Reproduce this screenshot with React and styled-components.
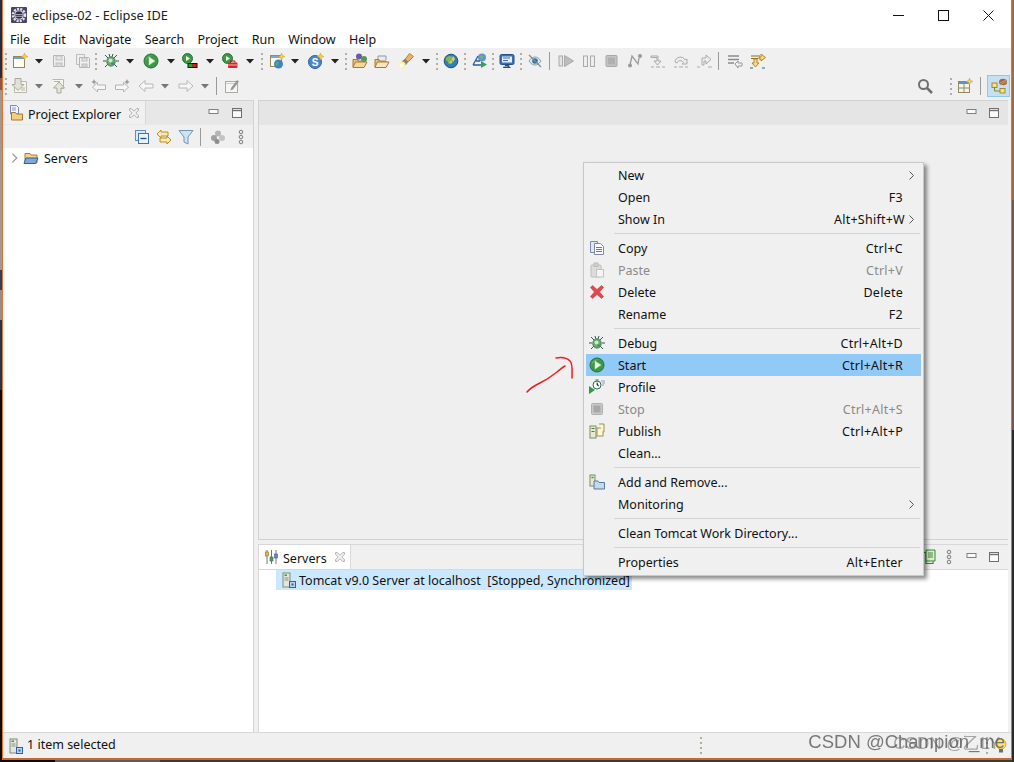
import React from 'react';
import styled, { createGlobalStyle } from 'styled-components';

const GlobalStyle = createGlobalStyle`
  html, body {
    margin: 0;
    padding: 0;
    width: 1014px;
    height: 762px;
    overflow: hidden;
  }
  html {
    background:
      linear-gradient(#1c2f4a 0 78px, #8a5a3a 78px 90px, #9a9a9a 90px 270px, #2c4060 270px 290px, #8f8f8f 290px 320px, #24344e 320px 390px, #0c0c0c 390px) left top / 2px 100% no-repeat,
      linear-gradient(#a8693a 0 200px, #6f5a4c 200px 430px, #2a2a2a 430px) right top / 2px 100% no-repeat,
      linear-gradient(90deg, #0a0a0a 0 55px, #5c5c5c 55px 160px, #3a3a3a 160px) left bottom / 100% 2px no-repeat,
      #333;
  }
  body, button {
    font-family: "Noto Sans", "Open Sans", sans-serif;
    font-size: 12.5px;
    color: #111;
  }
`;

const Window = styled.div`
  position: relative;
  margin-left: 2px;
  width: 1010px;
  height: 760px;
  box-sizing: border-box;
  display: flex;
  flex-direction: column;
  background: #f0f0f0;
  border-left: 1px solid #e8702a;
  border-right: 1px solid #d07a3a;
  border-bottom: 2px solid #c96a28;
  overflow: hidden;
`;

const TitleBar = styled.div`
  height: 30px;
  display: flex;
  align-items: center;
  background: #fff;
  padding-left: 8px;
`;

const TitleText = styled.span`
  margin-left: 5px;
  font-size: 12.8px;
  color: #222;
`;

const WindowButtons = styled.div`
  margin-left: auto;
  display: flex;
`;

const WindowButton = styled.div`
  width: 45px;
  height: 30px;
  display: flex;
  align-items: center;
  justify-content: center;
`;

const MenuBar = styled.div`
  height: 18px;
  display: flex;
  align-items: center;
  gap: 13.3px;
  background: #fff;
  padding-left: 7px;
`;

const MenuTitle = styled.span`
  line-height: 18px;
  padding-top: 1px;
`;

const ToolArea = styled.div`
  height: 52px;
  background: #f0f0f0;
`;

const ToolRow = styled.div`
  height: ${p => p.$h}px;
  display: flex;
  align-items: center;
`;

const ToolSvg = styled.svg`
  flex: none;
  display: block;
  margin-left: ${p => p.$gap || 0}px;
`;

const Grip = styled.span`
  flex: none;
  width: 2px;
  height: 17px;
  margin-left: ${p => p.$gap}px;
  background: repeating-linear-gradient(#b5aea0 0 2px, transparent 2px 5px);
`;

const Divider = styled.span`
  flex: none;
  width: 1px;
  height: 18px;
  margin-left: ${p => p.$gap}px;
  background: #9a9a9a;
`;

const PushRight = styled.span`
  margin-left: auto;
`;

const ActiveBox = styled.span`
  flex: none;
  width: 21px;
  height: 20px;
  margin: 0 1px 0 6px;
  display: flex;
  align-items: center;
  justify-content: center;
  background: #c4e0f5;
  border: 1px solid #92c6ee;
`;

const Workbench = styled.div`
  flex: 1;
  min-height: 0;
  display: flex;
  gap: 4px;
  padding-right: 3px;
`;

const LeftPanel = styled.section`
  width: 250px;
  display: flex;
  flex-direction: column;
  border-right: 1px solid #d2d2d2;
  border-top: 1px solid #d2d2d2;
`;

const RightColumn = styled.div`
  flex: 1;
  min-width: 0;
  display: flex;
  flex-direction: column;
  gap: 4px;
`;

const PanelHeader = styled.div`
  height: ${p => p.$h}px;
  flex: none;
  box-sizing: border-box;
  display: flex;
  align-items: center;
  background: ${p => p.$bg};
  border-bottom: 1px solid ${p => p.$line || 'transparent'};
`;

const Tab = styled.div`
  width: ${p => p.$w}px;
  align-self: stretch;
  flex: none;
  box-sizing: border-box;
  display: flex;
  align-items: center;
  padding-left: ${p => p.$pad}px;
  background: ${p => p.$bg};
  border-right: 1px solid #d8d8d8;
`;

const TabLabel = styled.span`
  margin-left: ${p => p.$gap}px;
  margin-right: 6px;
  padding-top: ${p => p.$drop}px;
  white-space: nowrap;
`;

const ViewControls = styled.div`
  margin-left: auto;
  display: flex;
  align-items: center;
  gap: ${p => p.$gap || 7}px;
  padding-right: ${p => p.$pad || 7}px;
`;

const PanelToolbar = styled.div`
  height: 23px;
  flex: none;
  display: flex;
  align-items: center;
  justify-content: flex-end;
  padding-right: 4px;
  background: #f0f0f0;
`;

const Tree = styled.div`
  flex: 1;
  background: #fff;
`;

const TreeRow = styled.div`
  height: 20px;
  display: flex;
  align-items: center;
  padding-left: 5px;
`;

const TreeLabel = styled.span`
  margin-left: 5px;
`;

const EditorArea = styled.section`
  height: 440px;
  flex: none;
  box-sizing: border-box;
  display: flex;
  flex-direction: column;
  background: #efefef;
  border: 1px solid #d2d2d2;
  border-right: none;
`;

const ServersPanel = styled.section`
  flex: 1;
  min-height: 0;
  display: flex;
  flex-direction: column;
  border: 1px solid #d8d8d8;
  border-bottom: none;
  border-right: none;
`;

const ServerList = styled.div`
  flex: 1;
  background: #fff;
  padding-left: 17px;
`;

const ServerRow = styled.div`
  width: 356px;
  height: 20px;
  box-sizing: border-box;
  display: flex;
  align-items: center;
  padding-left: 5px;
  background: #cce8ff;
`;

const ServerLabel = styled.span`
  margin-left: 2px;
  white-space: pre;
`;

const StatusBar = styled.footer`
  height: 26px;
  flex: none;
  display: flex;
  align-items: center;
  padding-left: 5px;
  background: #f0f0f0;
  border-top: 1px solid #d8d8d8;
  box-sizing: border-box;
`;

const StatusText = styled.span`
  margin-left: 3px;
  padding-bottom: 3px;
`;

const ContextMenu = styled.div`
  position: absolute;
  left: 580px;
  top: 162px;
  width: 341px;
  box-sizing: border-box;
  padding: 1px 2px 2px;
  background: #f0f0f0;
  border: 1px solid #c8c8c8;
  box-shadow: 3px 3px 4px rgba(0, 0, 0, 0.45);
  z-index: 5;
`;

const MenuRow = styled.div`
  height: 22px;
  display: flex;
  align-items: center;
  background: ${p => (p.$active ? '#91c9f7' : 'transparent')};
  color: ${p => (p.$disabled ? '#8a8a8a' : '#111')};
`;

const MenuIconSlot = styled.span`
  flex: none;
  width: 32px;
  box-sizing: border-box;
  padding-left: 3px;
  display: flex;
  align-items: center;
`;

const MenuLabel = styled.span`
  white-space: nowrap;
`;

const Shortcut = styled.span`
  margin-left: auto;
  padding-right: 18px;
  letter-spacing: 0.25px;
  white-space: nowrap;
`;

const SubArrow = styled.span`
  margin-left: auto;
  padding-right: 7px;
  display: flex;
`;

const ShortcutWithArrow = styled(Shortcut)`
  padding-right: 4px;
`;

const ArrowAfter = styled.span`
  padding-right: 7px;
  display: flex;
`;

const MenuSeparator = styled.div`
  height: 1px;
  margin: 3px 1px 3px 28px;
  background: #d4d4d4;
`;

const Scribble = styled.svg`
  position: absolute;
  left: 521px;
  top: 355px;
  z-index: 6;
`;

const Watermark = styled.span`
  position: absolute;
  right: ${p => p.$right}px;
  bottom: ${p => p.$bottom}px;
  font-family: "Liberation Sans", Arial, sans-serif;
  font-size: ${p => p.$size}px;
  color: rgba(90, 90, 90, ${p => p.$alpha});
  filter: blur(0.4px);
  white-space: nowrap;
  z-index: 7;
`;

const ICONS = {
  app: <><rect x="0" y="0" width="16" height="16" rx="1" fill="#4b4568" /><circle cx="8" cy="8" r="6" fill="none" stroke="#e6e6e6" strokeWidth="2.400" strokeDasharray="2 1.200" /><circle cx="8" cy="8" r="4.600" fill="#e6e6e6" /><circle cx="8" cy="8" r="3.700" fill="#2c2a4c" /><path d="M4.500 7.500h7M4.500 9.300h7" stroke="#c8c8d4" strokeWidth=".8" /></>,
  new: <><rect x="1.500" y="3.500" width="11" height="11" fill="#fffdf2" stroke="#96845a" /><rect x="2" y="4" width="10" height="2" fill="#6f9fd6" /><path d="M12.500 0l1 2.500 2.500 1-2.500 1-1 2.500-1-2.500-2.500-1 2.500-1z" fill="#f6d04a" stroke="#c59a2a" strokeWidth=".5" /></>,
  save: <><path d="M2.500 2.500h10l1 1v10h-11z" fill="#f0f0f0" stroke="#b4b4b4" /><rect x="5" y="3" width="6" height="4" fill="#e4e4e4" stroke="#bdbdbd" /><rect x="5" y="10" width="6" height="3.500" fill="#d8d8d8" stroke="#bdbdbd" /></>,
  saveAll: <><path d="M1.500 1.500h8v3h-5v7h-3z" fill="#eee" stroke="#bdbdbd" /><path d="M4.500 4.500h9l1 1v9h-10z" fill="#f0f0f0" stroke="#b4b4b4" /><rect x="7" y="5" width="5" height="3" fill="#e4e4e4" stroke="#bdbdbd" /><rect x="7" y="11" width="5" height="3" fill="#d8d8d8" stroke="#bdbdbd" /></>,
  debug: <><path d="M2 2l3 3M14 2l-3 3M0 8h3M13 8h3M2 14l3-3M14 14l-3-3M6 1l1 3M10 1L9 4" stroke="#2e5a4c" strokeWidth="1" /><ellipse cx="8" cy="8.500" rx="4.200" ry="4.600" fill="#6fae6a" stroke="#3f7a5a" /><circle cx="7.500" cy="7.500" r="2" fill="#cfe6d0" /><circle cx="9.500" cy="10.500" r="1.200" fill="#3f8a7a" /></>,
  run: <><circle cx="8" cy="8" r="7" fill="#3a9a4a" stroke="#2b7039" /><path d="M2.500 8a5.500 5.500 0 0 1 8-4.900A7 7 0 0 0 2.500 11z" fill="#66b870" /><path d="M6 4l6 4-6 4z" fill="#f0f8e0" stroke="#d4e8b8" strokeWidth=".5" /></>,
  runServer: <><circle cx="5.500" cy="5.500" r="5" fill="#3a9a4a" stroke="#2b7039" /><path d="M4 3l4 2.500L4 8z" fill="#f0f8e0" /><rect x="5.500" y="10" width="10" height="5" fill="#111" /><rect x="6.500" y="11" width="4" height="3" fill="#22a52c" /><rect x="10.500" y="11" width="4" height="3" fill="#d81f1f" /></>,
  runTool: <><circle cx="5.500" cy="5.500" r="5" fill="#3a9a4a" stroke="#2b7039" /><path d="M4 3l4 2.500L4 8z" fill="#f0f8e0" /><rect x="6" y="9.500" width="9.500" height="5.500" rx="1" fill="#d8262c" /><path d="M8.500 9.500V8h4.500v1.500" fill="none" stroke="#a51a1f" /><rect x="6" y="11.500" width="9.500" height="1" fill="#f4b4b4" /></>,
  newServer: <><rect x="1.500" y="2.500" width="11" height="11" fill="#fbfaf0" stroke="#9a8a60" /><rect x="2" y="3" width="10" height="2" fill="#7ba6d8" /><circle cx="9.500" cy="11" r="4.500" fill="#3f83c4" /><path d="M7 9c2-1 3 1 2 3s-3 1-2-3z" fill="#62ad4e" /><path d="M12.500 0l1 2.500 2.500 1-2.500 1-1 2.500-1-2.500-2.500-1 2.500-1z" fill="#f6d04a" stroke="#c59a2a" strokeWidth=".5" /></>,
  springS: <><circle cx="7" cy="9" r="6.500" fill="#4a86c8" stroke="#2f629c" /><text x="7" y="12.500" textAnchor="middle" fontSize="10" fontWeight="700" fill="#fff" fontFamily="Liberation Sans">S</text><path d="M12.500 0l1 2.500 2.500 1-2.500 1-1 2.500-1-2.500-2.500-1 2.500-1z" fill="#f6d04a" stroke="#c59a2a" strokeWidth=".5" /></>,
  openProject: <><circle cx="7" cy="3.500" r="3" fill="#6a5aa8" /><circle cx="12" cy="6" r="3" fill="#4c9a5a" /><path d="M1 6.500h5v1.500h5v6H1z" fill="#e9c17c" stroke="#a97a2e" /><path d="M1 14l2.500-5H15l-3 5.500H1z" fill="#f3d89c" stroke="#a97a2e" /></>,
  openFile: <><path d="M4 7V3h8v4" fill="#e8eaf2" stroke="#8f97ad" /><path d="M1 6.500h4v1.500h7v6H1z" fill="#e9c17c" stroke="#a97a2e" /><path d="M1 14l2.500-5H15l-3 5.500H1z" fill="#f7e6c0" stroke="#a97a2e" /></>,
  torch: <><path d="M7 6.500L11.500 .5 15.500 3.500 10 9z" fill="#e8b464" stroke="#b8822a" /><path d="M4 8.500L7 6 10 9 7.500 12z" fill="#8a8078" stroke="#777" strokeWidth=".5" /><circle cx="4" cy="12" r="3.500" fill="#fff0a0" /><circle cx="3.500" cy="12.500" r="2" fill="#fffce8" /></>,
  globe: <><circle cx="8" cy="8" r="6.800" fill="#2f7fbe" stroke="#1f4f82" /><path d="M3 5c3-3 6-2 7 0s-1 3-2 5-3 1-3-1-3 0-2-4z" fill="#7db85a" /><path d="M10 3l2 3-2 3-1-3z" fill="#f4d050" /><circle cx="8" cy="9" r="1.500" fill="#e7c34a" /></>,
  globeRun: <><circle cx="10" cy="4.500" r="4" fill="#5f98d0" /><path d="M8 3c2-1 3 0 3 2l-2 1z" fill="#7db85a" /><path d="M1 12L6 3M1 12h8M4 8h4" stroke="#2f5b96" strokeWidth="1.300" /><path d="M9 8l6 3.500L9 15z" fill="#37a153" /></>,
  monitor: <><rect x="1" y="1.500" width="14" height="10" rx="1.500" fill="#3f6fb0" stroke="#25508c" /><rect x="3" y="3.500" width="10" height="6" fill="#e6eefa" /><path d="M4 5h7M4 7.500h5" stroke="#3f6fb0" strokeWidth="1" /><path d="M6 12.500h4v1.500H4.500v.5h7" fill="#25508c" stroke="#25508c" /></>,
  eye: <><path d="M2 8c2-3 4-4 6-4s4 1 6 4c-2 3-4 4-6 4s-4-1-6-4z" fill="#dfe8ee" stroke="#8aa0b0" /><circle cx="8" cy="8" r="2.800" fill="#1f78b0" /><path d="M2 2l12 12" stroke="#8a8a8a" strokeWidth="1.300" /></>,
  resume: <><rect x="1" y="3" width="3.500" height="10" fill="#e4e4e4" stroke="#aaa" /><path d="M6.500 2.500L15.500 8l-9 5.500z" fill="#bdbdbd" stroke="#aaa" /></>,
  pause: <><rect x="2.500" y="3" width="4" height="10.500" fill="#eee" stroke="#aaa" /><rect x="9.500" y="3" width="4" height="10.500" fill="#eee" stroke="#aaa" /></>,
  stop: <><rect x="2" y="2.500" width="11" height="11" rx="1" fill="#c4c4c4" stroke="#a8a8a8" /><rect x="4" y="4.500" width="7" height="7" fill="#b0b0b0" /></>,
  disconnect: <><circle cx="3" cy="12.500" r="2" fill="#999" /><circle cx="13" cy="3" r="2" fill="#999" /><path d="M3 12L5 3l6 8 1-6" fill="none" stroke="#9c9c9c" strokeWidth="1.300" /></>,
  stepInto: <><path d="M1 3h7v5h3l-3.500 4L4 8h3V4.500H1z" fill="#eee" stroke="#aaa" /><path d="M1 14h3M6 14h4M12 14h3" stroke="#aaa" strokeWidth="1.200" /></>,
  stepOver: <><path d="M2 9c0-5 8-7 10-2l2-1v5h-5l1.500-1.500C9 7 5 7 4 10z" fill="#eee" stroke="#aaa" /><path d="M1 14h3M6 14h4M12 14h3" stroke="#aaa" strokeWidth="1.200" /></>,
  stepReturn: <><path d="M5 12V5h4V2l5 4.500L9 11V8H7v4z" fill="#eee" stroke="#aaa" /><path d="M0 14h3M11 14h4" stroke="#aaa" strokeWidth="1.200" /></>,
  list: <><path d="M1 3h11M1 6.500h11M1 10h6" stroke="#8a8a8a" strokeWidth="1.400" /><path d="M8 11l3-3v2h4v3h-4v2z" fill="#f2f2f2" stroke="#999" /></>,
  useStep: <><path d="M1 3h9M1 5.500h7" stroke="#8c6a1e" strokeWidth="1.200" /><path d="M4 6h3v4h2l-3.500 4L2 10h2z" fill="#f6d98c" stroke="#b8861e" /><path d="M9 4h2V1l4.500 3.500L11 8V6H9z" fill="#f6d98c" stroke="#b8861e" /><path d="M0 15h3M12 15h3" stroke="#2f5b96" strokeWidth="1.200" /></>,
  importDoc: <><path d="M6.500 3.500h8v11h-12V9" fill="#f6f6f0" stroke="#b8b8ac" /><path d="M3 .5h6v6h3l-6 6-6-6h3z" fill="#e2e2d8" stroke="#a8a89c" /><path d="M9 10h4M9 12h4" stroke="#b4b4a8" /></>,
  exportDoc: <><path d="M1.500 1.500h11v9h-5" fill="#f6f6f0" stroke="#b8b8ac" /><path d="M6 15v-5H2.500L8 4l5.500 6H10v5z" fill="#e6e6dc" stroke="#a8a89c" /><path d="M3 3.500h6" stroke="#b4b4a8" /></>,
  backEdit: <><path d="M1.500 9l5-4.500V7h8v4.500h-8V14z" fill="#f6f6f6" stroke="#b4b4b4" /><path d="M3 1l.9 2 2 .9-2 .9-.9 2-.9-2-2-.9 2-.9z" fill="#9a9a9a" /></>,
  fwdEdit: <><path d="M14.500 9l-5-4.500V7h-8v4.500h8V14z" fill="#f6f6f6" stroke="#b4b4b4" /><path d="M13 1l.9 2 2 .9-2 .9-.9 2-.9-2-2-.9 2-.9z" fill="#9a9a9a" /></>,
  back: <path d="M1 8l6-5.500V6h8v4H7v3.500z" fill="#f6f6f6" stroke="#b8b8b8" />,
  forward: <path d="M15 8L9 2.500V6H1v4h8v3.500z" fill="#f6f6f6" stroke="#b8b8b8" />,
  pin: <><rect x="1.500" y="3.500" width="12" height="11" fill="#f6f6f2" stroke="#aaa" /><path d="M2 5.500h11" stroke="#ccc" /><path d="M7 10l6-8 2 1.500-6 8-2.500 1z" fill="#999" /></>,
  search: <><circle cx="6.500" cy="6.500" r="4.500" fill="none" stroke="#707070" strokeWidth="2" /><path d="M10 10l5 5" stroke="#707070" strokeWidth="2.500" /></>,
  perspective: <><rect x="1.500" y="3.500" width="11" height="11" fill="#f6f4e6" stroke="#8f8a66" /><rect x="2" y="4" width="10" height="2" fill="#5f92cc" /><path d="M7 6v8M2 10h10" stroke="#8f8a66" /><path d="M12.500 0l1 2.500 2.500 1-2.500 1-1 2.500-1-2.500-2.500-1 2.500-1z" fill="#f6d04a" stroke="#c59a2a" strokeWidth=".5" /></>,
  javaEE: <><rect x="1" y="5" width="5" height="4.500" fill="#f8e080" stroke="#a98a2a" /><rect x="9" y="10.500" width="5" height="4.500" fill="#f8e080" stroke="#a98a2a" /><path d="M3.500 9.500V13H9" fill="none" stroke="#7a8a3a" /><ellipse cx="12" cy="4" rx="4" ry="3.300" fill="#a5683a" /><path d="M9 5l6-3M10 6.500l5-3" stroke="#d8b08a" strokeWidth=".7" /></>,
  explorer: <><path d="M2.500 .5h6l2 2V9h-8z" fill="#f5f5ff" stroke="#7a86b0" /><path d="M4 3h4M4 5h4" stroke="#8a96c0" /><path d="M3.500 7.500h4l1 1.500h6v6h-11z" fill="#f3cf86" stroke="#a67a2c" /></>,
  tabClose: <path d="M3 3l2 0 3 3 3-3 2 0 0 2-3 3 3 3 0 2-2 0-3-3-3 3-2 0 0-2 3-3-3-3z" fill="#f4f4f4" stroke="#8e8e8e" strokeWidth=".8" />,
  collapse: <><rect x="1.500" y="1.500" width="10" height="10" fill="#dcebf8" stroke="#5f8fc0" /><rect x="4.500" y="4.500" width="10" height="10" fill="#e8f2fb" stroke="#3f74ae" /><path d="M6.500 9.500h6" stroke="#1f4f8a" strokeWidth="1.300" /></>,
  link: <><path d="M1 5l4-4v2h7v4H5v2z" fill="#fbeab8" stroke="#c08a1e" /><path d="M15 11l-4-4v2H4v4h7v2z" fill="#fbeab8" stroke="#c08a1e" /></>,
  filter: <path d="M1 1.500h14l-5 6.500v7l-4-2V8z" fill="#cfe2f2" stroke="#7096b8" />,
  group: <><circle cx="8" cy="4.500" r="3" fill="#b5b5b5" /><circle cx="4" cy="9" r="3" fill="#a0a0a0" /><circle cx="12" cy="9" r="3" fill="#c4c4c4" /><circle cx="7" cy="12.500" r="2.500" fill="#8e8e8e" /></>,
  viewMenu: <><circle cx="8" cy="3" r="1.800" fill="#e8e8e8" stroke="#7f7f7f" /><circle cx="8" cy="8" r="1.800" fill="#e8e8e8" stroke="#7f7f7f" /><circle cx="8" cy="13" r="1.800" fill="#e8e8e8" stroke="#7f7f7f" /></>,
  minimize: <rect x="3" y="4.500" width="9" height="4" fill="#fafafa" stroke="#7f7f7f" />,
  maximize: <><rect x="2.500" y="3.500" width="9" height="9" fill="#fafafa" stroke="#6f6f6f" /><path d="M3 5.500h8" stroke="#6f6f6f" strokeWidth="1.400" /></>,
  chevron: <path d="M5 3l5 5-5 5" fill="none" stroke="#9a9a9a" strokeWidth="1.500" />,
  folder: <><path d="M2 3.500h5l1 1.500h6v8H2z" fill="#f2d58c" stroke="#a97f34" /><path d="M1 13.500l2-5.500h12l-2.500 5.500z" fill="#7fa9dc" stroke="#2f5f9e" /></>,
  copy: <><path d="M1.500 1.500h7v11h-7z" fill="#dfe7f2" stroke="#7a8aa8" /><path d="M5.500 3.500h6l3 3v8h-9z" fill="#fbfbff" stroke="#7a8aa8" /><path d="M7 7.500h6M7 9.500h6M7 11.500h6" stroke="#6a7aa0" /></>,
  paste: <><rect x="2" y="3" width="10" height="12" rx="1" fill="#dcdcdc" stroke="#bdbdbd" /><rect x="5" y="1" width="4" height="3.500" fill="#cfcfcf" stroke="#bdbdbd" /><rect x="7.500" y="7.500" width="7" height="7.500" fill="#f4f4f4" stroke="#c4c4c4" /></>,
  delete: <path d="M1.500 3.500L3.500 1.500 8 5.500 12.500 1.500 14.500 3.500 10.500 8 14.500 12.500 12.500 14.500 8 10.500 3.500 14.500 1.500 12.500 5.500 8z" fill="#e0494c" stroke="#c8383a" strokeWidth=".6" />,
  profile: <><circle cx="8" cy="6" r="4" fill="#fff" stroke="#2e6a4a" /><path d="M8 3.500V6l2 1M6.500 1h3" stroke="#2e6a4a" /><path d="M12 2h4M13 4h3M13 6h2" stroke="#6a8ac0" strokeWidth=".8" /><path d="M0 7l6 4-6 4z" fill="#2f9a4a" /></>,
  stopSmall: <><rect x="2.500" y="2.500" width="11" height="11" rx="1" fill="#c8c8c8" stroke="#b0b0b0" /><rect x="4.500" y="4.500" width="7" height="7" fill="#a8a8a8" /></>,
  publish: <><rect x="1" y="3" width="6" height="12" fill="#e6ebd8" stroke="#7a8a6a" /><path d="M2.500 5.500h3M2.500 8.500h3" stroke="#3a8a3a" strokeWidth="1.200" /><rect x="8" y="5" width="6" height="8" fill="#fff7d0" stroke="#a09050" /><path d="M10 1h5v8h-1" fill="#fff7d0" stroke="#a09050" /></>,
  addRemove: <><rect x="1" y="1" width="5" height="11" fill="#e6ebd8" stroke="#7a8a6a" /><path d="M2.500 3.500h2" stroke="#2f9a3a" strokeWidth="1.500" /><path d="M5 7h4l1 1.500h5.500V15H5z" fill="#c6d8ec" stroke="#5a7a9a" /></>,
  server: <><rect x="2" y="1" width="7" height="14" fill="#e4e6da" stroke="#7f8a80" /><rect x="3.500" y="2.500" width="2.500" height="1.500" fill="#2fa23a" /><path d="M3.500 6h4M3.500 8h4" stroke="#8a9288" /><rect x="8.500" y="9.500" width="6" height="6" fill="#b8d4f0" stroke="#2f5fa6" /><rect x="10.500" y="11.500" width="2" height="2" fill="#2f5fa6" /></>,
  serversTab: <><path d="M4 1v14M8.500 1v14M13 1v14" stroke="#777" /><rect x="2.500" y="3" width="3" height="4" fill="#e8b84a" stroke="#8a6a1e" strokeWidth=".6" /><rect x="7" y="8" width="3" height="4" fill="#5f9a5a" stroke="#3a6a3a" strokeWidth=".6" /><rect x="11.500" y="5" width="3" height="4" fill="#5f8fc8" stroke="#2f5f96" strokeWidth=".6" /></>,
  greenDoc: <><path d="M1 3.500h4v11h7v-2" fill="none" stroke="#2f8a3a" strokeWidth="1.200" /><path d="M5 1h9v11H5z" fill="#dff0c8" stroke="#2f8a3a" /><path d="M7 4h5M7 6h5M7 8h5" stroke="#3a8a3a" /></>,
  bulb: <><circle cx="8" cy="6" r="5" fill="#fbe27a" stroke="#d8a92e" /><rect x="6" y="11" width="4" height="3.500" fill="#5a6f96" /></>,
};

const Icon = ({ name, gap, size = 16 }) => (
  <ToolSvg $gap={gap} width={size} height={size} viewBox="0 0 16 16">
    {ICONS[name]}
  </ToolSvg>
);

const Drop = ({ gap, color = '#222' }) => (
  <ToolSvg $gap={gap} width="8" height="5" viewBox="0 0 8 5">
    <path d="M0 0h8L4 4.500z" fill={color} />
  </ToolSvg>
);

const SmallArrow = () => (
  <svg width="5" height="9" viewBox="0 0 5 9">
    <path d="M0.500 0.500L4.500 4.500 0.500 8.500" fill="none" stroke="#555" />
  </svg>
);

const TOP_TOOLS = [
  ['grip', 2], ['new', 5], ['drop', 7], ['save', 8], ['saveAll', 8], ['grip', 4],
  ['debug', 6], ['drop', 7], ['run', 9], ['drop', 8], ['runServer', 7], ['drop', 8],
  ['runTool', 8], ['drop', 8], ['grip', 7], ['newServer', 6], ['drop', 6], ['springS', 9],
  ['drop', 7], ['grip', 6], ['openProject', 5], ['openFile', 6], ['torch', 8], ['drop', 8],
  ['grip', 6], ['globe', 5], ['grip', 5], ['globeRun', 6], ['grip', 4], ['monitor', 5],
  ['grip', 5], ['eye', 5], ['sep', 6], ['resume', 8], ['pause', 7], ['stop', 7],
  ['disconnect', 7], ['stepInto', 7], ['stepOver', 7], ['stepReturn', 8], ['sep', 5],
  ['list', 8], ['useStep', 7],
];

const LOWER_TOOLS = [
  ['grip', 2], ['importDoc', 5], ['greyDrop', 7], ['exportDoc', 8], ['greyDrop', 8],
  ['backEdit', 8], ['fwdEdit', 7], ['back', 8], ['greyDrop', 7], ['forward', 9],
  ['greyDrop', 7], ['sep', 7], ['pin', 7],
];

const renderTool = ([name, gap], i) => {
  if (name === 'grip') return <Grip key={i} $gap={gap} />;
  if (name === 'sep') return <Divider key={i} $gap={gap} />;
  if (name === 'drop') return <Drop key={i} gap={gap} />;
  if (name === 'greyDrop') return <Drop key={i} gap={gap} color="#777" />;
  return <Icon key={i} name={name} gap={gap} />;
};

const MENU = [
  { label: 'New', sub: true },
  { label: 'Open', keys: 'F3' },
  { label: 'Show In', keys: 'Alt+Shift+W', sub: true },
  'sep',
  { label: 'Copy', icon: 'copy', keys: 'Ctrl+C' },
  { label: 'Paste', icon: 'paste', keys: 'Ctrl+V', disabled: true },
  { label: 'Delete', icon: 'delete', keys: 'Delete' },
  { label: 'Rename', keys: 'F2' },
  'sep',
  { label: 'Debug', icon: 'debug', keys: 'Ctrl+Alt+D' },
  { label: 'Start', icon: 'run', keys: 'Ctrl+Alt+R', active: true },
  { label: 'Profile', icon: 'profile' },
  { label: 'Stop', icon: 'stopSmall', keys: 'Ctrl+Alt+S', disabled: true },
  { label: 'Publish', icon: 'publish', keys: 'Ctrl+Alt+P' },
  { label: 'Clean...' },
  'sep',
  { label: 'Add and Remove...', icon: 'addRemove' },
  { label: 'Monitoring', sub: true },
  'sep',
  { label: 'Clean Tomcat Work Directory...' },
  'sep',
  { label: 'Properties', keys: 'Alt+Enter' },
];

const MenuEntry = ({ item }) => (
  <MenuRow $active={item.active} $disabled={item.disabled}>
    <MenuIconSlot>{item.icon && <Icon name={item.icon} />}</MenuIconSlot>
    <MenuLabel>{item.label}</MenuLabel>
    {item.keys && !item.sub && <Shortcut>{item.keys}</Shortcut>}
    {item.keys && item.sub && <ShortcutWithArrow>{item.keys}</ShortcutWithArrow>}
    {item.sub && !item.keys && <SubArrow><SmallArrow /></SubArrow>}
    {item.sub && item.keys && <ArrowAfter><SmallArrow /></ArrowAfter>}
  </MenuRow>
);

const MENU_TITLES = ['File', 'Edit', 'Navigate', 'Search', 'Project', 'Run', 'Window', 'Help'];

export default function App() {
  return (
    <>
      <GlobalStyle />
      <Window>
        <TitleBar>
          <Icon name="app" />
          <TitleText>eclipse-02 - Eclipse IDE</TitleText>
          <WindowButtons>
            <WindowButton>
              <svg width="11" height="11" viewBox="0 0 11 11"><path d="M0 5.500h11" stroke="#111" /></svg>
            </WindowButton>
            <WindowButton>
              <svg width="11" height="11" viewBox="0 0 11 11"><rect x=".5" y=".5" width="10" height="10" fill="none" stroke="#111" /></svg>
            </WindowButton>
            <WindowButton>
              <svg width="11" height="11" viewBox="0 0 11 11"><path d="M.5.500l10 10M10.500.500l-10 10" stroke="#111" /></svg>
            </WindowButton>
          </WindowButtons>
        </TitleBar>

        <MenuBar>
          {MENU_TITLES.map(t => <MenuTitle key={t}>{t}</MenuTitle>)}
        </MenuBar>

        <ToolArea>
          <ToolRow $h={26}>{TOP_TOOLS.map(renderTool)}</ToolRow>
          <ToolRow $h={24}>
            {LOWER_TOOLS.map(renderTool)}
            <PushRight />
            <Icon name="search" />
            <Grip $gap={17} />
            <Icon name="perspective" gap={5} />
            <Divider $gap={7} />
            <ActiveBox><Icon name="javaEE" /></ActiveBox>
          </ToolRow>
        </ToolArea>

        <Workbench>
          <LeftPanel>
            <PanelHeader $h={24} $bg="#e7e7e7">
              <Tab $w={143} $pad={5} $bg="#f0f0f0">
                <Icon name="explorer" />
                <TabLabel $gap={4} $drop={4}>Project Explorer</TabLabel>
                <Icon name="tabClose" size={14} />
              </Tab>
              <ViewControls $gap={8} $pad={7}>
                <Icon name="minimize" />
                <Icon name="maximize" />
              </ViewControls>
            </PanelHeader>
            <PanelToolbar>
              <Icon name="collapse" />
              <Icon name="link" gap={6} />
              <Icon name="filter" gap={6} />
              <Divider $gap={6} />
              <Icon name="group" gap={9} />
              <Icon name="viewMenu" gap={7} />
            </PanelToolbar>
            <Tree>
              <TreeRow>
                <Icon name="chevron" size={14} />
                <Icon name="folder" gap={1} />
                <TreeLabel>Servers</TreeLabel>
              </TreeRow>
            </Tree>
          </LeftPanel>

          <RightColumn>
            <EditorArea>
              <PanelHeader $h={24} $bg="#e5e5e5">
                <ViewControls $gap={7} $pad={5}>
                  <Icon name="minimize" />
                  <Icon name="maximize" />
                </ViewControls>
              </PanelHeader>
            </EditorArea>
            <ServersPanel>
              <PanelHeader $h={25} $bg="#f0f0f0" $line="#d8d8d8">
                <Tab $w={92} $pad={4} $bg="#fff">
                  <Icon name="serversTab" />
                  <TabLabel $gap={4} $drop={2}>Servers</TabLabel>
                  <Icon name="tabClose" size={14} />
                </Tab>
                <ViewControls $gap={4} $pad={5}>
                  <Icon name="greenDoc" />
                  <Icon name="viewMenu" />
                  <Icon name="minimize" gap={3} />
                  <Icon name="maximize" gap={3} />
                </ViewControls>
              </PanelHeader>
              <ServerList>
                <ServerRow>
                  <Icon name="server" />
                  <ServerLabel>Tomcat v9.0 Server at localhost  [Stopped, Synchronized]</ServerLabel>
                </ServerRow>
              </ServerList>
            </ServersPanel>
          </RightColumn>
        </Workbench>

        <StatusBar>
          <Icon name="server" />
          <StatusText>1 item selected</StatusText>
          <Grip $gap={584} />
          <Grip $gap={284} />
          <Icon name="bulb" gap={5} />
        </StatusBar>

        <ContextMenu>
          {MENU.map((item, i) =>
            item === 'sep' ? <MenuSeparator key={i} /> : <MenuEntry key={i} item={item} />
          )}
        </ContextMenu>
      </Window>

      <Scribble width="56" height="42" viewBox="521 355 56 42">
        <path d="M527 392c4-5 9-7 13-9s12-7 17-11 6-5 8-6M556 358c6-1 11 0 14 3s2 10 2 17" fill="none" stroke="#ee1c25" strokeWidth="1.500" strokeLinecap="round" />
      </Scribble>
      <Watermark $right={9} $bottom={9} $size={18.5} $alpha={0.8}>CSDN @Champion_me</Watermark>
      <Watermark $right={14} $bottom={7} $size={17} $alpha={0.5}>CSDN @乙LY</Watermark>
    </>
  );
}
